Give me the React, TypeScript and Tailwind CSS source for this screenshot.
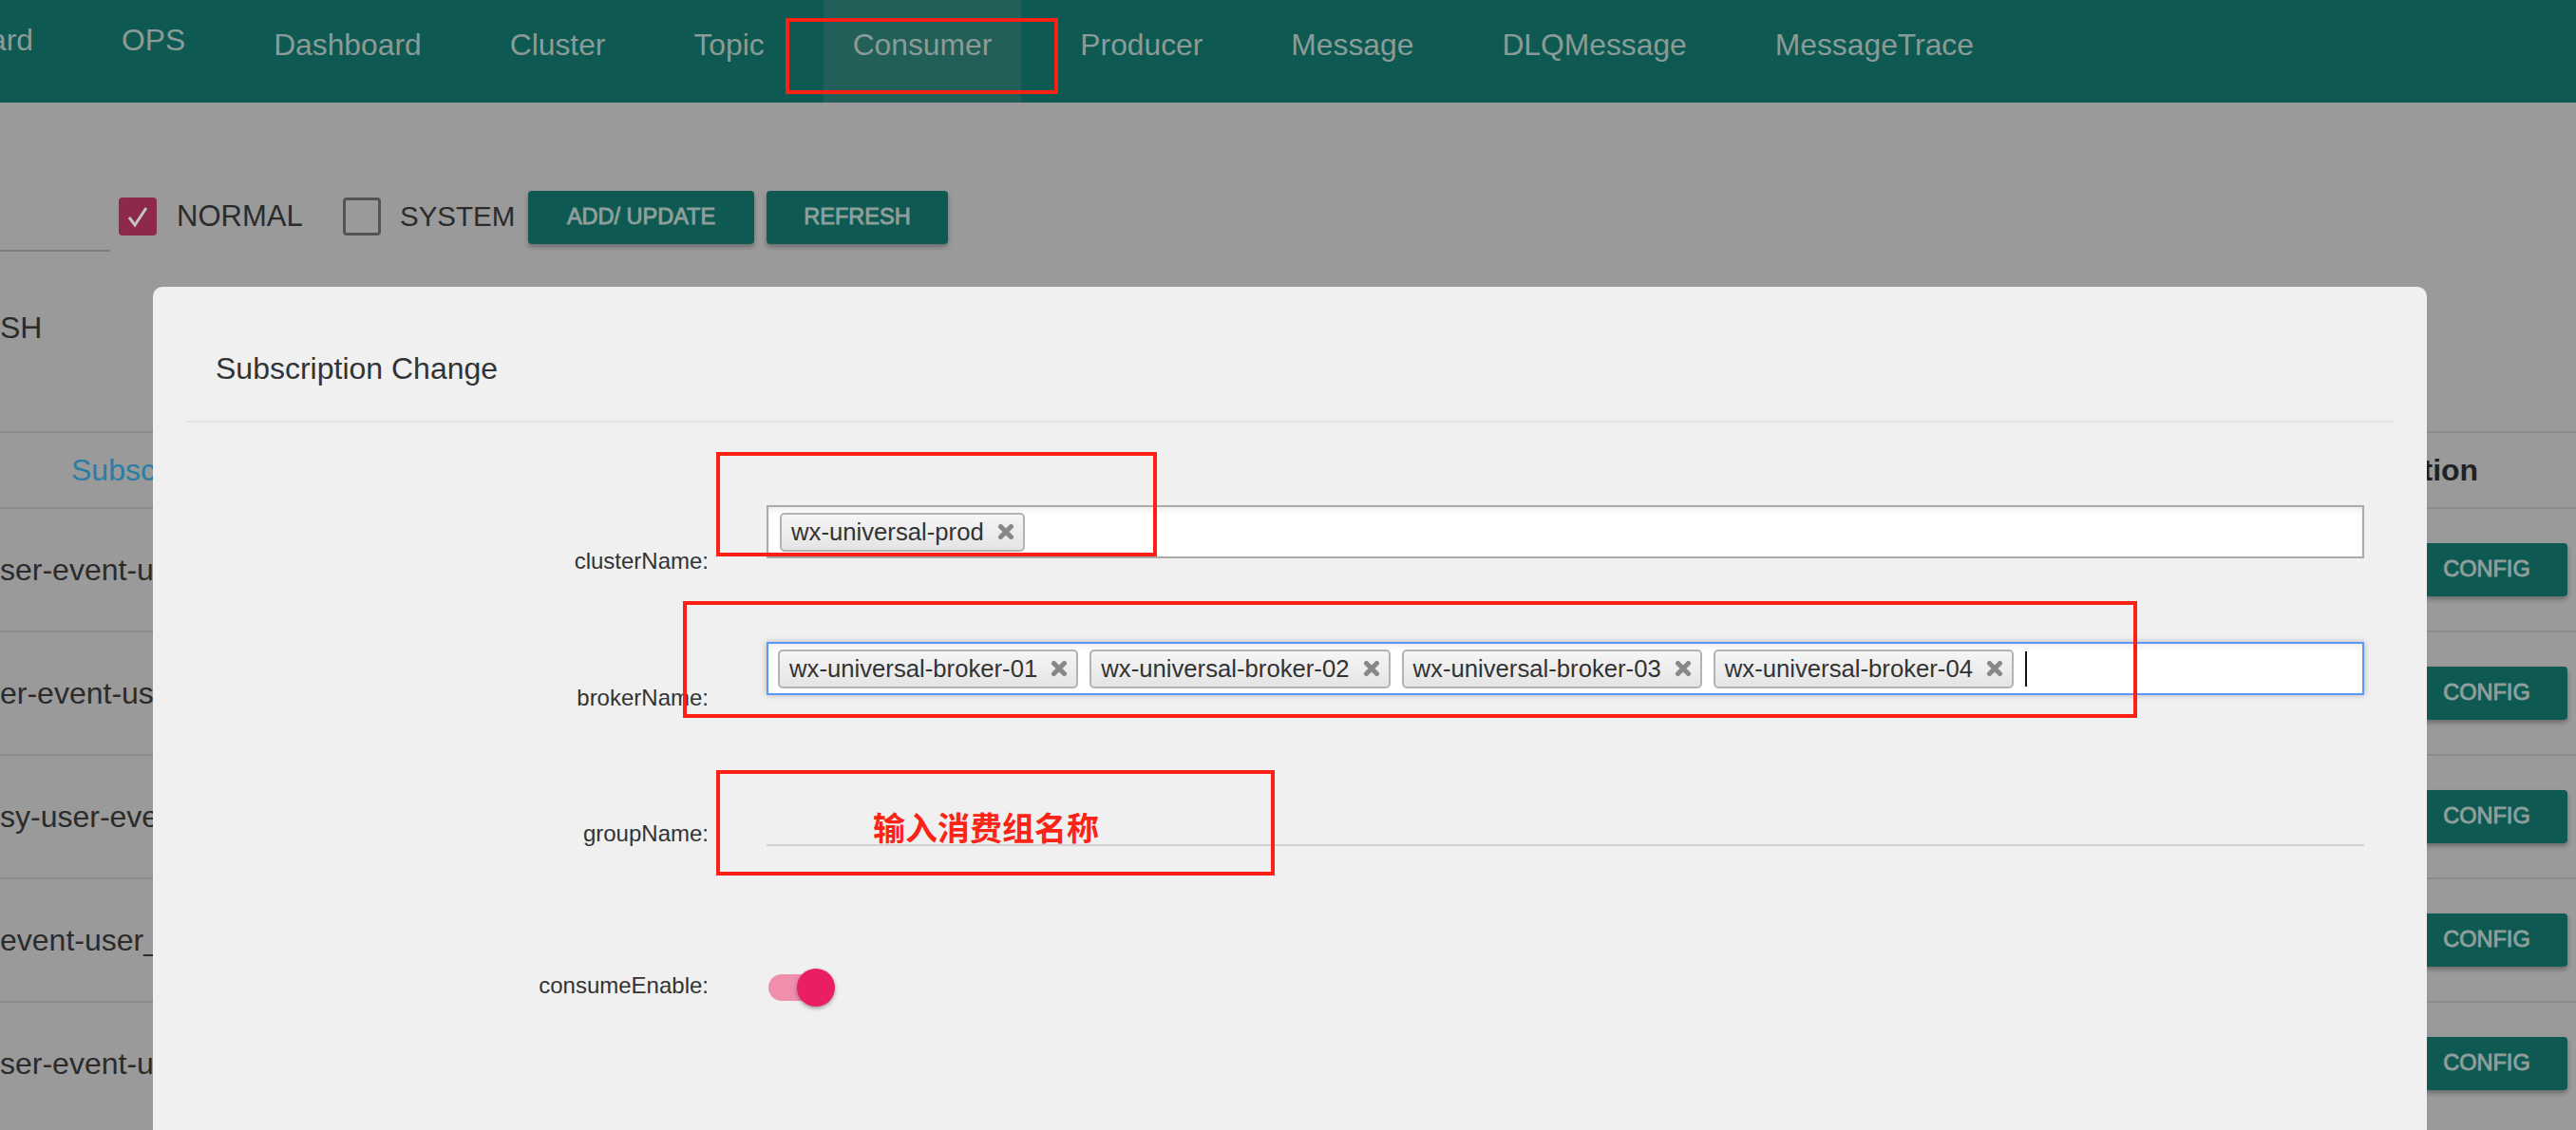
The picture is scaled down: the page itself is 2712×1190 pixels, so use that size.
import React from "react";

function XIcon() {
  return (
    <svg width="18" height="18" viewBox="0 0 18 18" className="shrink-0">
      <path d="M3.5 3.5 L14.5 14.5 M14.5 3.5 L3.5 14.5" stroke="#888888" strokeWidth="5" strokeLinecap="round" />
    </svg>
  );
}

function Tag({ label }: { label: string }) {
  return (
    <span className="inline-flex items-center h-[41px] pl-[10px] pr-[9px] gap-[14px] rounded-[5px] border-2 border-[#b3b3b3] bg-linear-to-b from-[#f6f6f6] to-[#e4e4e4] text-[25.7px] leading-[30px] text-[#333] whitespace-nowrap shrink-0">
      {label}
      <XIcon />
    </span>
  );
}

const navItems = ["Dashboard", "Cluster", "Topic", "Consumer", "Producer", "Message", "DLQMessage", "MessageTrace"];

const rows = [
  "ser-event-user-consumer-group",
  "er-event-user-consumer-group",
  "sy-user-event-consumer-group",
  "event-user_consumer-group",
  "ser-event-user-consumer-group",
];

const btn =
  "h-[56px] rounded-[4px] bg-[#0e5a52] text-[#8e9f9c] text-[23.5px] [-webkit-text-stroke:0.9px_#8e9f9c] shadow-[0_3px_5px_rgba(0,0,0,0.3)] shrink-0";

export default function App() {
  return (
    <div className="relative w-[2712px] h-[1190px] overflow-hidden bg-[#9a9a9a] font-['Liberation_Sans',Arial,Helvetica,sans-serif]">
      {/* header */}
      <header className="h-[108px] bg-[#0e5a52] flex items-stretch text-[31.8px] leading-[36px] text-[#8a9b98] whitespace-nowrap">
        <div className="-ml-[11px] pr-[31px] pt-[24px]">ard</div>
        <div className="ml-[31px] px-[31px] pt-[24px]">OPS</div>
        {navItems.map((n) => (
          <div
            key={n}
            className={
              n === "Consumer"
                ? "ml-[31px] px-[31px] pt-[29px] bg-[#215f58]"
                : "ml-[31px] px-[31px] pt-[29px]"
            }
          >
            {n}
          </div>
        ))}
      </header>

      {/* toolbar */}
      <div className="flex items-start mt-[93px] h-[64px] whitespace-nowrap">
        <div className="w-[116px] h-[64px] border-b-2 border-[#7d7d7d] shrink-0" />
        <div className="ml-[9px] mt-[7px] w-[40px] h-[40px] rounded-[4px] bg-[#8e2a49] flex items-center justify-center shrink-0">
          <svg width="40" height="40" viewBox="0 0 40 40">
            <path d="M11 21 L17 29 L29 11" stroke="#c4c4c4" strokeWidth="3" fill="none" />
          </svg>
        </div>
        <span className="ml-[21px] mt-[7px] w-[133px] leading-[40px] text-[31px] text-[#2b2b2b]">NORMAL</span>
        <div className="ml-[42px] mt-[7px] w-[40px] h-[40px] rounded-[4px] border-[3px] border-[#545454] shrink-0" />
        <span className="ml-[20px] mt-[7px] w-[121px] leading-[40px] text-[29.5px] text-[#2b2b2b]">SYSTEM</span>
        <button className={"ml-[14px] w-[238px] " + btn}>ADD/ UPDATE</button>
        <button className={"ml-[13px] w-[191px] " + btn}>REFRESH</button>
      </div>

      {/* second line */}
      <div className="mt-[60px] leading-[40px] text-[32px] text-[#2b2b2b]">SH</div>

      {/* table */}
      <div className="mt-[89px] border-t-2 border-[#8a8a8a]">
        <div className="flex items-center h-[78px]">
          <div className="flex-1 pl-[75px] text-[32px] text-[#2b7da6] whitespace-nowrap overflow-hidden">Subscription Group</div>
          <div className="w-[254px] text-[32px] font-bold text-[#222] whitespace-nowrap">Operation</div>
        </div>
        {rows.map((r, i) => (
          <div key={i} className="flex items-center h-[130px] border-t-2 border-[#8a8a8a]">
            <div className="flex-1 text-[32px] text-[#2b2b2b] whitespace-nowrap overflow-hidden">{r}</div>
            <div className="w-[254px] flex">
              <button className={"ml-[75px] w-[170px] " + btn}>CONFIG</button>
            </div>
          </div>
        ))}
      </div>

      {/* modal */}
      <div className="absolute left-[161px] top-[302px] w-[2394px] h-[950px] rounded-[10px] bg-[#f0f0f0]">
        <div className="pt-[68px] pb-[36px] pl-[66px] text-[32px] leading-[37px] text-[#333]">Subscription Change</div>
        <div className="mx-[35px] h-[2px] bg-[#e3e3e3]" />
        <div className="pt-[87px]">
          {/* clusterName */}
          <div className="flex h-[144px]">
            <div className="w-[585px] text-right pt-[45px] text-[24px] leading-[28px] text-[#333]">clusterName:</div>
            <div className="ml-[61px] w-[1682px] h-[56px] border-2 border-[#aaaaaa] bg-white flex items-center pl-[12px] shadow-[inset_0_4px_5px_rgba(0,0,0,0.06)]">
              <Tag label="wx-universal-prod" />
            </div>
          </div>
          {/* brokerName */}
          <div className="flex h-[159px]">
            <div className="w-[585px] text-right pt-[45px] text-[24px] leading-[28px] text-[#333]">brokerName:</div>
            <div className="ml-[61px] w-[1682px] h-[56px] border-2 border-[#5b98f8] bg-white flex items-center pl-[10px] gap-[12px] shadow-[inset_0_4px_5px_rgba(0,0,0,0.06),0_0_6px_rgba(0,0,0,0.25)]">
              <Tag label="wx-universal-broker-01" />
              <Tag label="wx-universal-broker-02" />
              <Tag label="wx-universal-broker-03" />
              <Tag label="wx-universal-broker-04" />
              <span className="w-[2px] h-[37px] bg-[#111]" />
            </div>
          </div>
          {/* groupName */}
          <div className="flex h-[165px]">
            <div className="w-[585px] text-right pt-[29px] text-[24px] leading-[28px] text-[#333]">groupName:</div>
            <div className="ml-[61px] w-[1682px] h-[56px] border-b-2 border-[#d2d2d2]" />
          </div>
          {/* consumeEnable */}
          <div className="flex h-[120px]">
            <div className="w-[585px] text-right pt-[24px] text-[24px] leading-[28px] text-[#333]">consumeEnable:</div>
            <div className="ml-[61px] mt-[20px] relative w-[72px] h-[40px]">
              <div className="absolute left-[2px] top-[6px] w-[66px] h-[28px] rounded-full bg-[#f08fab]" />
              <div className="absolute left-[32px] top-0 w-[40px] h-[40px] rounded-full bg-[#e91e63] shadow-[0_2px_4px_rgba(0,0,0,0.35)]" />
            </div>
          </div>
        </div>
      </div>

      {/* red annotations */}
      <div className="absolute left-[827px] top-[19px] w-[287px] h-[80px] border-4 border-[#fe2015]" />
      <div className="absolute left-[754px] top-[476px] w-[464px] h-[110px] border-4 border-[#fe2015]" />
      <div className="absolute left-[719px] top-[633px] w-[1531px] h-[123px] border-4 border-[#fe2015]" />
      <div className="absolute left-[754px] top-[811px] w-[588px] h-[111px] border-4 border-[#fe2015]" />
      <div className="absolute left-[919px] top-[851px] text-[34px] leading-[40px] font-bold text-[#fb2417] whitespace-nowrap font-['Noto_Sans_CJK_SC',sans-serif]">
        输入消费组名称
      </div>
    </div>
  );
}
